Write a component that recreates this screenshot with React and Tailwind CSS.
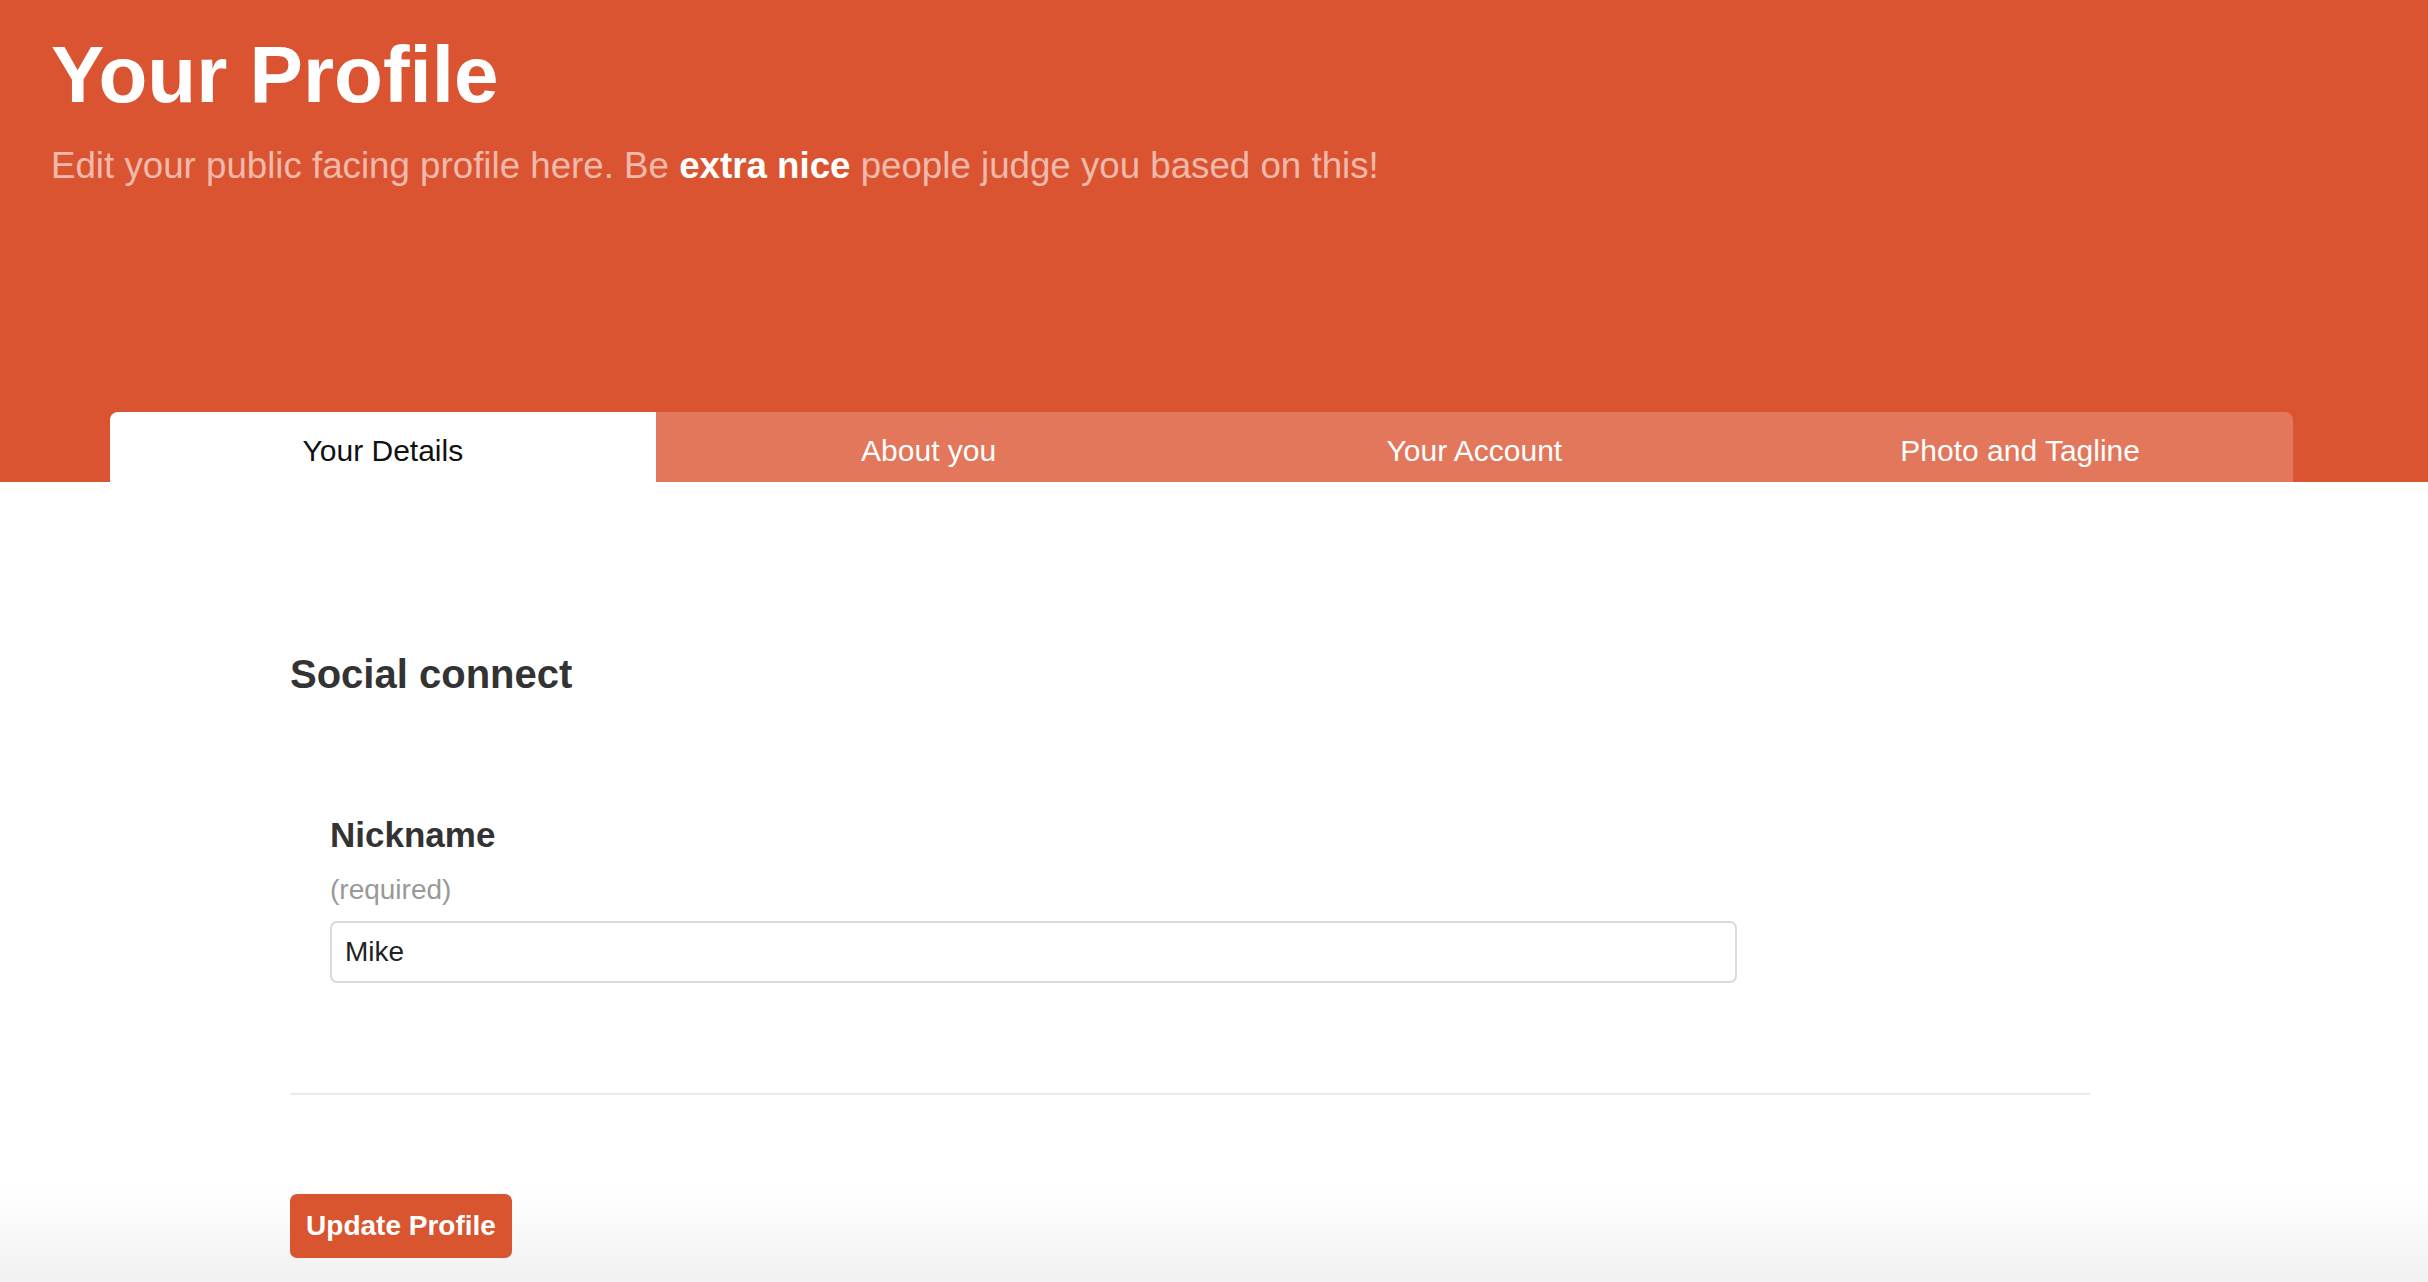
const tabs = ['Your Details', 'About you', 'Your Account', 'Photo and Tagline']

function ProfileHeader() {
  return (
    <header className="flex h-[482px] flex-col bg-[#db5431]">
      <div className="pl-[51px] pt-[35px]">
        <h1 className="text-[80px] font-bold leading-none text-white">Your Profile</h1>
        <p className="mt-[33px] text-[36.7px] leading-none text-white/60">
          Edit your public facing profile here. Be{' '}
          <strong className="font-bold text-white">extra nice</strong> people judge you based on
          this!
        </p>
      </div>
      <nav className="ml-[110px] mt-auto flex h-[70px] w-[2183px] overflow-hidden rounded-t-[8px] bg-[#e2775b]">
        {tabs.map((tab, index) => (
          <button
            key={tab}
            className={
              index === 0
                ? 'flex flex-1 items-center justify-center bg-white pt-[7px] text-[30px] text-[#111]'
                : 'flex flex-1 items-center justify-center pt-[7px] text-[30px] text-white'
            }
          >
            {tab}
          </button>
        ))}
      </nav>
    </header>
  )
}

export default function App() {
  return (
    <div className="flex min-h-[1282px] flex-col font-['Liberation_Sans',Arial,sans-serif]">
      <ProfileHeader />
      <main className="flex-1 bg-[linear-gradient(to_bottom,#ffffff_88%,#f1f1f1)]">
        <div className="ml-[290px] w-[1800px] pt-[168px]">
          <h2 className="text-[40px] font-bold leading-[48px] text-[#333]">Social connect</h2>

          <div className="ml-[40px] mt-[116px] w-[1407px]">
            <label className="block text-[35px] font-bold leading-[42px] text-[#333]">
              Nickname
            </label>
            <p className="mt-[17px] text-[28px] leading-[34px] text-[#999]">(required)</p>
            <input
              defaultValue="Mike"
              className="mt-[14px] h-[62px] w-full rounded-[7px] border-2 border-[#dadada] pl-[13px] text-[28px] text-[#222] outline-none"
            />
          </div>

          <hr className="mt-[110px] border-0 border-t-2 border-[#ececec]" />

          <button className="mt-[99px] h-[64px] w-[222px] rounded-[7px] bg-[#d9552f] text-[28px] font-bold text-white">
            Update Profile
          </button>
        </div>
      </main>
    </div>
  )
}
